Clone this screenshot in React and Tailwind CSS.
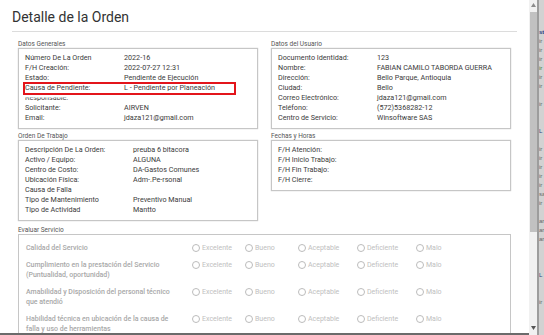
const generales = [
  ["Número De La Orden", "2022-16"],
  ["F/H Creación:", "2022-07-27 12:31"],
  ["Estado:", "Pendiente de Ejecución"],
];

const generales2 = [
  ["Solicitante:", "AIRVEN"],
  ["Email:", "jdaza121@gmail.com"],
];

const usuario = [
  ["Documento Identidad:", "123"],
  ["Nombre:", "FABIAN CAMILO TABORDA GUERRA"],
  ["Dirección:", "Bello Parque, Antioquia"],
  ["Ciudad:", "Bello"],
  ["Correo Electrónico:", "jdaza121@gmail.com"],
  ["Teléfono:", "(572)5368282-12"],
  ["Centro de Servicio:", "Winsoftware SAS"],
];

const orden = [
  ["Descripción De La Orden:", "preuba 6 bitacora"],
  ["Activo / Equipo:", "ALGUNA"],
  ["Centro de Costo:", "DA-Gastos Comunes"],
  ["Ubicación Física:", "Adm-.Pe-rsonal"],
  ["Causa de Falla", ""],
  ["Tipo de Mantenimiento", "Preventivo Manual"],
  ["Tipo de Actividad", "Mantto"],
];

const fechas = ["F/H Atención:", "F/H Inicio Trabajo:", "F/H Fin Trabajo:", "F/H Cierre:"];

const preguntas = [
  ["Calidad del Servicio"],
  ["Cumplimiento en la prestación del Servicio", "(Puntualidad, oportunidad)"],
  ["Amabilidad y Disposición del personal técnico", "que atendió"],
  ["Habilidad técnica en ubicación de la causa de", "falla y uso de herramientas"],
];

const opciones = [
  ["Excelente", "w-[53px]"],
  ["Bueno", "w-[53px]"],
  ["Aceptable", "w-[59px]"],
  ["Deficiente", "w-[59px]"],
  ["Malo", "w-[40px]"],
];

const Row = ({ label, value, labelW = "w-[99px]" }) => (
  <div className="flex h-[10px] leading-[10px] whitespace-nowrap">
    <span className={`${labelW} shrink-0`}>{label}</span>
    <span>{value}</span>
  </div>
);

const Section = ({ title, children }) => (
  <div>
    <div className="text-[6.5px] leading-[8px] text-[#555]">{title}</div>
    <div className="border border-[#c6c6c6] shadow-[0_0_1px_rgba(0,0,0,0.25)] pt-[4px] pb-[5px] px-[6px] text-[7.2px] text-[#3a3a3a]">
      {children}
    </div>
  </div>
);

const Radio = ({ label, w }) => (
  <div className={`flex items-center gap-[2px] h-[10px] ${w}`}>
    <span className="w-[8px] h-[8px] rounded-full border border-[#bcbcbc] shrink-0" />
    <span className="text-[7px] leading-[10px] text-[#c0c0c0]">{label}</span>
  </div>
);

export default function App() {
  return (
    <div className="flex w-[544px] h-[335px] overflow-hidden bg-white font-['Roboto',sans-serif]">
      <div className="w-[529px] h-[335px] shrink-0 overflow-hidden border-b-2 border-[#6b6b6b]">
        <div className="px-[12px] pt-[9px]">
          <h1 className="text-[14px] leading-[17px] text-[#333]">Detalle de la Orden</h1>
          <div className="mt-[5px] h-px bg-[#dcdcdc]" />

          <div className="px-[6px] pt-[8px]">
            <div className="grid grid-cols-2 gap-x-[13px] gap-y-[3px] items-start">
              <Section title="Datos Generales">
                {generales.map(([l, v]) => (
                  <Row key={l} label={l} value={v} />
                ))}
                <div className="relative">
                  <Row label="Causa de Pendiente:" value="L - Pendiente por Planeación" />
                  <div className="absolute left-[-2px] top-[-1px] w-[213px] h-[13px] border-2 border-[#e3151b]" />
                </div>
                <div className="[clip-path:inset(45%_0_0_0)]">
                  <Row label="Responsable:" value="" />
                </div>
                {generales2.map(([l, v]) => (
                  <Row key={l} label={l} value={v} />
                ))}
              </Section>

              <Section title="Datos del Usuario">
                {usuario.map(([l, v]) => (
                  <Row key={l} label={l} value={v} />
                ))}
              </Section>

              <Section title="Orden De Trabajo">
                {orden.map(([l, v]) => (
                  <Row key={l} label={l} value={v} labelW="w-[108px]" />
                ))}
              </Section>

              <Section title="Fechas y Horas">
                {fechas.map((l) => (
                  <Row key={l} label={l} value="" />
                ))}
              </Section>
            </div>

            <div className="mt-[5px] text-[6.5px] leading-[8px] text-[#555]">Evaluar Servicio</div>
            <div className="border-x border-t border-[#c6c6c6] h-[120px] pt-[8px] px-[7px] flex flex-col gap-[7px]">
              {preguntas.map((lines) => (
                <div key={lines[0]} className="flex items-start">
                  <div className="w-[166px] shrink-0 text-[7px] leading-[10px] font-medium text-[#a8a8a8]">
                    {lines.map((t) => (
                      <div key={t}>{t}</div>
                    ))}
                  </div>
                  {opciones.map(([o, w]) => (
                    <Radio key={o} label={o} w={w} />
                  ))}
                </div>
              ))}
            </div>
          </div>
        </div>
      </div>

      {/* scrollbar */}
      <div className="w-[8px] h-[335px] shrink-0 bg-[#f1f1f1] flex flex-col items-center">
        <svg width="5" height="4" className="mt-[3px]">
          <path d="M2.5 0 L5 4 L0 4 Z" fill="#8c8c8c" />
        </svg>
        <div className="mt-[5px] w-[7px] h-[220px] bg-[#c1c1c1]" />
        <div className="flex-1" />
        <svg width="5" height="4" className="mb-[5px]">
          <path d="M0 0 L5 0 L2.5 4 Z" fill="#555" />
        </svg>
      </div>

      {/* background page behind */}
      <div className="w-[7px] h-[335px] shrink-0 bg-[#d2d2d2] border-l-2 border-[#9d9d9d] overflow-hidden text-[6px] leading-[9px] text-[#666] font-['Liberation_Sans',sans-serif]">
        <div className="mt-[28px] text-[#2b3d80] font-bold">st</div>
        <div>ir</div>
        <div>ir</div>
        <div>ir</div>
        <div className="text-[#4a7a3a]">ir</div>
        <div>ir</div>
        <div>ir</div>
        <div className="mt-[9px]">ir</div>
        <div className="mt-[18px] text-[#2b3d80]">L</div>
        <div className="mt-[9px]">ir</div>
        <div>ir</div>
        <div>ir</div>
        <div>ir</div>
        <div>ir</div>
        <div>sa</div>
        <div>ir</div>
        <div className="mt-[9px]">ar</div>
        <div>ar</div>
        <div>ar</div>
        <div className="mt-[27px] text-[#2b3d80]">L</div>
        <div className="mt-[18px]">ir</div>
      </div>
    </div>
  );
}
